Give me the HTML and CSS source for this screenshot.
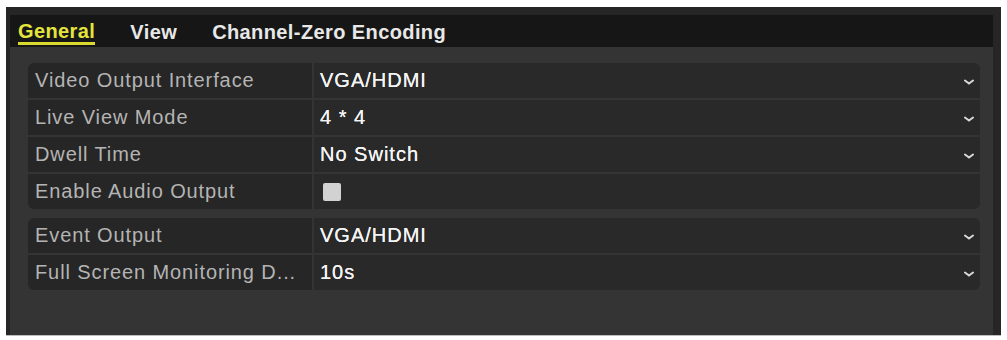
FILE: index.html
```html
<!DOCTYPE html>
<html>
<head>
<meta charset="utf-8">
<link rel="stylesheet" href="styles.css">
</head>
<body>
<div class="window">
  <div class="tabs">
    <span class="tab active">General</span>
    <span class="tab">View</span>
    <span class="tab">Channel-Zero Encoding</span>
  </div>
  <div class="panel">
    <div class="group">
      <div class="row">
        <div class="label">Video Output Interface</div>
        <div class="value"><span>VGA/HDMI</span><svg class="chev" width="10" height="6" viewBox="0 0 10 6"><path d="M1 1.5 L5 4.5 L9 1.5" fill="none" stroke="#d8d8d8" stroke-width="2" stroke-linecap="round"/></svg></div>
      </div>
      <div class="row">
        <div class="label">Live View Mode</div>
        <div class="value"><span>4 * 4</span><svg class="chev" width="10" height="6" viewBox="0 0 10 6"><path d="M1 1.5 L5 4.5 L9 1.5" fill="none" stroke="#d8d8d8" stroke-width="2" stroke-linecap="round"/></svg></div>
      </div>
      <div class="row">
        <div class="label">Dwell Time</div>
        <div class="value"><span>No Switch</span><svg class="chev" width="10" height="6" viewBox="0 0 10 6"><path d="M1 1.5 L5 4.5 L9 1.5" fill="none" stroke="#d8d8d8" stroke-width="2" stroke-linecap="round"/></svg></div>
      </div>
      <div class="row">
        <div class="label">Enable Audio Output</div>
        <div class="value"><span class="check"></span></div>
      </div>
    </div>
    <div class="group">
      <div class="row">
        <div class="label">Event Output</div>
        <div class="value"><span>VGA/HDMI</span><svg class="chev" width="10" height="6" viewBox="0 0 10 6"><path d="M1 1.5 L5 4.5 L9 1.5" fill="none" stroke="#d8d8d8" stroke-width="2" stroke-linecap="round"/></svg></div>
      </div>
      <div class="row">
        <div class="label">Full Screen Monitoring D...</div>
        <div class="value"><span>10s</span><svg class="chev" width="10" height="6" viewBox="0 0 10 6"><path d="M1 1.5 L5 4.5 L9 1.5" fill="none" stroke="#d8d8d8" stroke-width="2" stroke-linecap="round"/></svg></div>
      </div>
    </div>
  </div>
</div>
</body>
</html>
```

FILE: styles.css
```css
html, body {
  margin: 0;
  padding: 0;
  background: #ffffff;
}
body {
  font-family: "Liberation Sans", Arial, sans-serif;
}
.window {
  margin: 7px 0 0 6px;
  width: 995px;
  height: 329px;
  box-sizing: border-box;
  background: #262626;
  padding: 8px 8px 0 4px;
  display: flex;
  flex-direction: column;
  border-bottom: 1px solid #bdbdbd;
}
.tabs {
  height: 32px;
  background: #161616;
  display: flex;
  align-items: center;
  gap: 35px;
  padding-left: 8px;
  flex: none;
}
.tab {
  color: #e8e8e8;
  font-size: 20px;
  font-weight: bold;
  letter-spacing: 0.4px;
  line-height: 24px;
  position: relative;
  top: 1px;
}
.tab.active {
  color: #e4e43c;
  border-bottom: 3px solid #dada2e;
  line-height: 20px;
  padding-bottom: 1px;
  top: 2px;
}
.panel {
  flex: 1;
  background: #343434;
  padding: 16px 13px 0 18px;
  display: flex;
  flex-direction: column;
  gap: 9px;
}
.group {
  display: flex;
  flex-direction: column;
  gap: 2px;
  border-radius: 6px;
  overflow: hidden;
}
.row {
  display: flex;
  height: 35px;
  gap: 2px;
}
.label {
  width: 284px;
  flex: none;
  background: #262626;
  color: #b4b4b4;
  font-size: 20px;
  letter-spacing: 0.9px;
  padding-left: 7px;
  box-sizing: border-box;
  display: flex;
  align-items: center;
  white-space: nowrap;
  overflow: hidden;
}
.value {
  flex: 1;
  background: #292929;
  color: #f4f4f4;
  font-size: 20px;
  letter-spacing: 1px;
  text-shadow: 0 0 0.6px #ffffff;
  padding: 0 6px 0 6px;
  display: flex;
  align-items: center;
  justify-content: space-between;
}
.chev {
  display: block;
  margin-top: 2px;
}
.check {
  width: 18px;
  height: 18px;
  margin-left: 3px;
  background: #d2d2d2;
  border-radius: 2px;
}
```
